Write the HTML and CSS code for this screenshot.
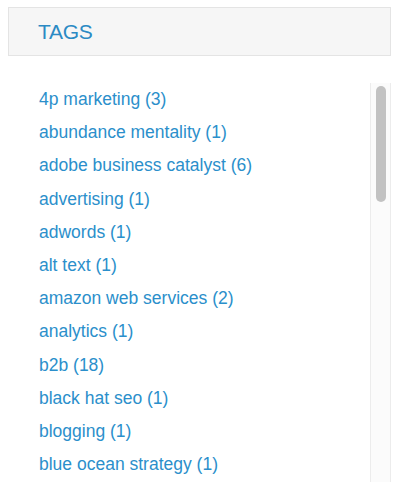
FILE: index.html
```html
<!DOCTYPE html>
<html>
<head>
<meta charset="utf-8">
<link rel="stylesheet" href="styles.css">
</head>
<body>
<div class="widget">
  <div class="widget-head"><h3 class="widget-title">TAGS</h3></div>
  <div class="widget-body">
    <ul class="tag-list">
      <li><a href="#">4p marketing (3)</a></li>
      <li><a href="#">abundance mentality (1)</a></li>
      <li><a href="#">adobe business catalyst (6)</a></li>
      <li><a href="#">advertising (1)</a></li>
      <li><a href="#">adwords (1)</a></li>
      <li><a href="#">alt text (1)</a></li>
      <li><a href="#">amazon web services (2)</a></li>
      <li><a href="#">analytics (1)</a></li>
      <li><a href="#">b2b (18)</a></li>
      <li><a href="#">black hat seo (1)</a></li>
      <li><a href="#">blogging (1)</a></li>
      <li><a href="#">blue ocean strategy (1)</a></li>
    </ul>
    <div class="scrollbar"><div class="thumb"></div></div>
  </div>
</div>
</body>
</html>
```
FILE: styles.css
```css
html, body {
  margin: 0;
  padding: 0;
  background: #ffffff;
  height: 482px;
  overflow: hidden;
}
body {
  font-family: "Liberation Sans", Arial, sans-serif;
}
.widget {
  padding: 7px 9px 0 8px;
}
.widget-head {
  height: 47px;
  background: #f6f6f6;
  border: 1px solid #e4e4e4;
  display: flex;
  align-items: center;
  padding-left: 29px;
}
.widget-title {
  margin: 0;
  font-size: 21px;
  font-weight: normal;
  color: #2b8ac4;
  letter-spacing: -0.3px;
}
.widget-body {
  display: flex;
  margin-top: 27px;
  height: 420px;
}
.tag-list {
  list-style: none;
  margin: 0;
  padding: 6px 0 0 31px;
  flex: 1;
}
.tag-list li {
  height: 33.2px;
  line-height: 20px;
  font-size: 17.5px;
}
.tag-list a {
  color: #2b8fcb;
  text-decoration: none;
}
.scrollbar {
  width: 19px;
  border-left: 1px solid #ececec;
  border-right: 1px solid #ececec;
  background: #fbfbfb;
  display: flex;
  justify-content: center;
  padding-top: 3px;
  align-self: stretch;
}
.thumb {
  width: 10px;
  height: 116px;
  border-radius: 5px;
  background: #c2c2c2;
}
```
